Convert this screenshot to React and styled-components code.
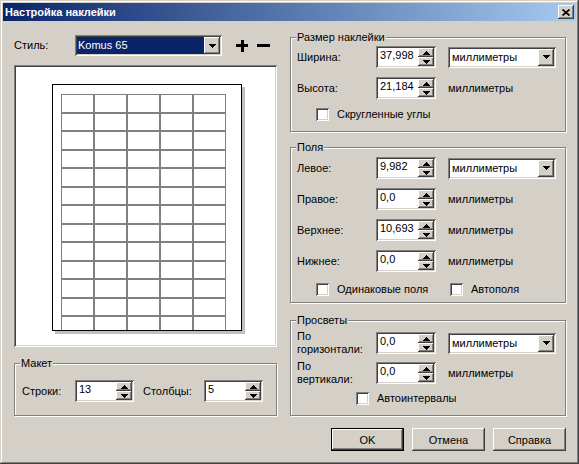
import React from 'react';
import styled, { createGlobalStyle } from 'styled-components';

const FACE = '#d4d0c8';

const raised = `box-shadow: inset -1px -1px #404040, inset 1px 1px #ffffff, inset -2px -2px #808080, inset 2px 2px ${FACE};`;
const sunken = `box-shadow: inset 1px 1px #808080, inset -1px -1px #ffffff, inset 2px 2px #404040, inset -2px -2px ${FACE};`;

const GlobalStyle = createGlobalStyle`
  html, body {
    margin: 0;
    padding: 0;
    background: ${FACE};
  }
  body {
    font-family: 'Liberation Sans', Arial, sans-serif;
    font-size: 11px;
    color: #000;
  }
  * {
    box-sizing: border-box;
  }
`;

const Window = styled.div`
  width: 579px;
  height: 464px;
  background: ${FACE};
  padding: 3px;
  box-shadow: inset -1px -1px #404040, inset 1px 1px ${FACE}, inset -2px -2px #808080, inset 2px 2px #ffffff;

  display: flex;
  flex-direction: column;
`;

const TitleBar = styled.div`
  height: 18px;
  background: linear-gradient(to right, #0a246a, #a6caf0);

  display: flex;
  align-items: center;
  justify-content: space-between;

  padding: 0 2px 0 2px;
`;

const Title = styled.div`
  color: #fff;
  font-weight: bold;
  font-size: 11px;
`;

const CloseButton = styled.div`
  width: 16px;
  height: 14px;
  background: ${FACE};
  ${raised}

  display: flex;
  align-items: center;
  justify-content: center;
`;

const Body = styled.div`
  flex: 1;
  display: flex;
  gap: 13px;
  padding: 14px 10px 0 11px;
`;

const LeftColumn = styled.div`
  width: 263px;
  display: flex;
  flex-direction: column;
`;

const RightColumn = styled.div`
  width: 276px;
  display: flex;
  flex-direction: column;
`;

const StyleRow = styled.div`
  height: 21px;
  display: flex;
  align-items: center;
`;

const Label = styled.div`
  width: ${(p) => (p.$width ? `${p.$width}px` : 'auto')};
  margin-left: ${(p) => p.$gap || 0}px;
  line-height: 13px;
  white-space: nowrap;
`;

const ToolIcon = styled.svg`
  margin-left: ${(p) => p.$gap}px;
  display: block;
`;

const Combo = styled.div`
  width: ${(p) => p.$width}px;
  height: 21px;
  background: #fff;
  ${sunken}
  padding: 2px;

  display: flex;
`;

const ComboText = styled.div`
  flex: 1;
  background: ${(p) => (p.$selected ? '#0a246a' : 'transparent')};
  color: ${(p) => (p.$selected ? '#fff' : '#000')};
  padding-left: ${(p) => (p.$selected ? 1 : 2)}px;
  line-height: 17px;
  white-space: nowrap;
  overflow: hidden;
`;

const DropButton = styled.div`
  width: 16px;
  height: 17px;
  background: ${FACE};
  ${raised}

  display: flex;
  align-items: center;
  justify-content: center;
`;

const Preview = styled.div`
  margin-top: 9px;
  height: 282px;
  background: #fff;
  ${sunken}
  padding: 19px 0 0 38px;
`;

const Page = styled.div`
  width: 190px;
  height: 247px;
  background: #fff;
  border: 1px solid #000;
  box-shadow: 3px 3px 0 #c0c0c0;
  overflow: hidden;
  padding: 9px 0 0 8px;
`;

const LabelGrid = styled.div`
  display: grid;
  grid-template-columns: repeat(5, 33px);
  grid-template-rows: repeat(13, 18.5px);
`;

const Cell = styled.div`
  border: 1px solid #808080;
`;

const GroupBox = styled.div`
  position: relative;
  margin-top: ${(p) => p.$top}px;
  height: ${(p) => p.$height}px;
  border: 1px solid #808080;
  box-shadow: inset 1px 1px #ffffff, 1px 1px #ffffff;
  padding: ${(p) => p.$pad};
`;

const Legend = styled.div`
  position: absolute;
  top: -7px;
  left: 5px;
  padding: 0 1px;
  background: ${FACE};
  line-height: 13px;
  white-space: nowrap;
`;

const LayoutRow = styled.div`
  display: flex;
  align-items: center;
`;

const FieldGrid = styled.div`
  display: grid;
  grid-template-columns: 79px 72px auto;
  grid-auto-rows: 22px;
  row-gap: ${(p) => p.$gap}px;
  align-items: center;
`;

const FieldLabel = styled.div`
  line-height: 13px;
  white-space: nowrap;
`;

const UnitText = styled.div`
  padding-left: 0;
  line-height: 13px;
`;

const SpinField = styled.div`
  width: ${(p) => p.$width}px;
  height: 22px;
  background: #fff;
  ${sunken}
  padding: 2px;

  display: flex;
`;

const SpinValue = styled.div`
  flex: 1;
  overflow: hidden;
  white-space: nowrap;
  padding: 1px 0 0 2px;
  line-height: 13px;
`;

const SpinButtons = styled.div`
  width: 16px;
  display: flex;
  flex-direction: column;
`;

const SpinButton = styled.div`
  flex: 1;
  background: ${FACE};
  ${raised}

  display: flex;
  align-items: center;
  justify-content: center;
`;

const CheckRow = styled.div`
  margin-top: ${(p) => p.$top}px;
  padding-left: ${(p) => p.$indent}px;
  display: flex;
  align-items: center;
`;

const CheckItem = styled.div`
  width: ${(p) => (p.$width ? `${p.$width}px` : 'auto')};
  display: flex;
  align-items: center;
`;

const CheckBox = styled.div`
  width: 13px;
  height: 13px;
  background: #fff;
  ${sunken}
`;

const CheckLabel = styled.div`
  margin-left: 8px;
  line-height: 13px;
  white-space: nowrap;
`;

const ButtonRow = styled.div`
  margin-top: 12px;
  display: flex;
  justify-content: flex-end;
  gap: 8px;
`;

const PushButton = styled.div`
  width: 73px;
  height: 23px;
  background: ${FACE};
  border: ${(p) => (p.$default ? '1px solid #000' : 'none')};
  ${raised}

  display: flex;
  align-items: center;
  justify-content: center;
`;

const Arrow = ({ up }) => (
  <svg width="7" height="4" viewBox="0 0 7 4" shapeRendering="crispEdges">
    <polygon points={up ? '3.5,0 7,4 0,4' : '0,0 7,0 3.5,4'} fill="#000" />
  </svg>
);

const Spinner = ({ value, width = 60 }) => (
  <SpinField $width={width}>
    <SpinValue>{value}</SpinValue>
    <SpinButtons>
      <SpinButton>
        <Arrow up />
      </SpinButton>
      <SpinButton>
        <Arrow />
      </SpinButton>
    </SpinButtons>
  </SpinField>
);

const ComboBox = ({ text, width = 108, selected }) => (
  <Combo $width={width}>
    <ComboText $selected={selected}>{text}</ComboText>
    <DropButton>
      <Arrow />
    </DropButton>
  </Combo>
);

const Check = ({ label, width }) => (
  <CheckItem $width={width}>
    <CheckBox />
    <CheckLabel>{label}</CheckLabel>
  </CheckItem>
);

export default function App() {
  return (
    <>
      <GlobalStyle />
      <Window>
        <TitleBar>
          <Title>Настройка наклейки</Title>
          <CloseButton>
            <svg width="8" height="7" viewBox="0 0 8 7">
              <path d="M0.5 0.5 L7.5 6.5 M7.5 0.5 L0.5 6.5" stroke="#000" strokeWidth="1.7" />
            </svg>
          </CloseButton>
        </TitleBar>

        <Body>
          <LeftColumn>
            <StyleRow>
              <Label $width={61}>Стиль:</Label>
              <ComboBox text="Komus 65" width={147} selected />
              <ToolIcon $gap={14} width="12" height="12" viewBox="0 0 12 12" shapeRendering="crispEdges">
                <rect x="0" y="4" width="12" height="3" fill="#000" />
                <rect x="4.5" y="0" width="3" height="12" fill="#000" />
              </ToolIcon>
              <ToolIcon $gap={9} width="13" height="12" viewBox="0 0 13 12" shapeRendering="crispEdges">
                <rect x="0" y="4" width="13" height="3" fill="#000" />
              </ToolIcon>
            </StyleRow>

            <Preview>
              <Page>
                <LabelGrid>
                  {Array.from({ length: 65 }).map((_, i) => (
                    <Cell key={i} />
                  ))}
                </LabelGrid>
              </Page>
            </Preview>

            <GroupBox $top={16} $height={53} $pad="16px 0 0 7px">
              <Legend>Макет</Legend>
              <LayoutRow>
                <Label $width={53}>Строки:</Label>
                <Spinner value="13" width={59} />
                <Label $width={61} $gap={9}>Столбцы:</Label>
                <Spinner value="5" width={59} />
              </LayoutRow>
            </GroupBox>
          </LeftColumn>

          <RightColumn>
            <GroupBox $top={2} $height={95} $pad="8px 0 0 6px">
              <Legend>Размер наклейки</Legend>
              <FieldGrid $gap={9}>
                <FieldLabel>Ширина:</FieldLabel>
                <Spinner value="37,998" />
                <ComboBox text="миллиметры" />
                <FieldLabel>Высота:</FieldLabel>
                <Spinner value="21,184" />
                <UnitText>миллиметры</UnitText>
              </FieldGrid>
              <CheckRow $top={9} $indent={19}>
                <Check label="Скругленные углы" />
              </CheckRow>
            </GroupBox>

            <GroupBox $top={15} $height={156} $pad="9px 0 0 6px">
              <Legend>Поля</Legend>
              <FieldGrid $gap={9}>
                <FieldLabel>Левое:</FieldLabel>
                <Spinner value="9,982" />
                <ComboBox text="миллиметры" />
                <FieldLabel>Правое:</FieldLabel>
                <Spinner value="0,0" />
                <UnitText>миллиметры</UnitText>
                <FieldLabel>Верхнее:</FieldLabel>
                <Spinner value="10,693" />
                <UnitText>миллиметры</UnitText>
                <FieldLabel>Нижнее:</FieldLabel>
                <Spinner value="0,0" />
                <UnitText>миллиметры</UnitText>
              </FieldGrid>
              <CheckRow $top={11} $indent={19}>
                <Check label="Одинаковые поля" width={134} />
                <Check label="Автополя" />
              </CheckRow>
            </GroupBox>

            <GroupBox $top={17} $height={96} $pad="11px 0 0 6px">
              <Legend>Просветы</Legend>
              <FieldGrid $gap={8}>
                <FieldLabel>
                  По
                  <br />
                  горизонтали:
                </FieldLabel>
                <Spinner value="0,0" />
                <ComboBox text="миллиметры" />
                <FieldLabel>
                  По
                  <br />
                  вертикали:
                </FieldLabel>
                <Spinner value="0,0" />
                <UnitText>миллиметры</UnitText>
              </FieldGrid>
              <CheckRow $top={8} $indent={59}>
                <Check label="Автоинтервалы" />
              </CheckRow>
            </GroupBox>

            <ButtonRow>
              <PushButton $default>OK</PushButton>
              <PushButton>Отмена</PushButton>
              <PushButton>Справка</PushButton>
            </ButtonRow>
          </RightColumn>
        </Body>
      </Window>
    </>
  );
}
